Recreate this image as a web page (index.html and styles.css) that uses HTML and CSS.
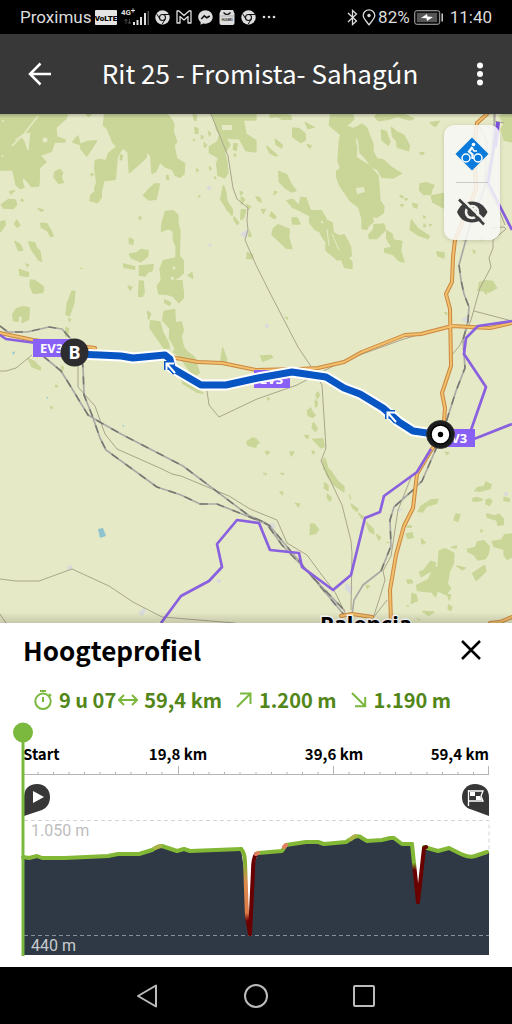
FILE: index.html
```html
<!DOCTYPE html>
<html lang="nl">
<head>
<meta charset="utf-8">
<meta name="viewport" content="width=device-width, initial-scale=1">
<title>Rit 25 - Fromista- Sahagún</title>
<link rel="stylesheet" href="styles.css">
</head>
<body>
<svg width="0" height="0" class="defs" aria-hidden="true">
  <symbol id="chrome" viewBox="0 0 15 15">
    <circle cx="7.500" cy="7.500" r="7.200" fill="#ddd"/>
    <circle cx="7.500" cy="7.500" r="3" fill="#ddd" stroke="#111" stroke-width="1.100"/>
    <path d="M7.500 4.500H14M4.800 9 1.700 3.800M10.200 9 7 14.500" stroke="#111" stroke-width="1"/>
  </symbol>
</svg>

<div class="status">
  <div class="status-left">
    <span>Proximus</span>
    <svg class="volte" width="22" height="15" viewBox="0 0 22 15"><rect width="22" height="15" rx="1" fill="#e4e4e4"/><text x="11" y="11" text-anchor="middle" class="volte-text">VoLTE</text></svg>
    <svg class="signal" width="28" height="18" viewBox="0 0 28 18"><text x="0" y="7" class="net">4G</text><path d="M10 2.500h4M12 .5v4" stroke="#ddd"/><path d="M5 16v-5M3.500 13 5 11l1.500 2M8.500 11v5M7 14l1.500 2 1.500-2" stroke="#444" fill="none"/><path d="M13 17v-3M16.500 17v-5M20 17V9M24 17V5" stroke="#ddd" stroke-width="2"/><path d="M27.300 17V3" stroke="#555" stroke-width="1.500"/></svg>
    <svg width="15" height="15"><use href="#chrome"/></svg>
    <svg width="16" height="14" viewBox="0 0 16 14"><path d="M1 13V1h2l5 4.500L13 1h2v12h-3V6.500L8 10 4 6.500V13z" fill="none" stroke="#ddd" stroke-width="1.300" stroke-linejoin="round"/></svg>
    <svg width="15" height="15" viewBox="0 0 15 15"><path d="M7.500.3C3.400.3.200 3.300.200 7.100c0 2.100.9 3.800 2.400 5v2.600l2.500-1.300c.8.200 1.500.3 2.400.3 4.100 0 7.200-2.900 7.200-6.600S11.600.3 7.500.3z" fill="#ddd"/><path d="m3.300 9 3-3.200 2.500 2L11.800 6" fill="none" stroke="#111" stroke-width="1.600"/></svg>
    <svg width="16" height="15" viewBox="0 0 16 15"><path d="M2 0h12l1.500 3.500V13q0 2-2 2h-11q-2 0-2-2V3.500z" fill="#ddd"/><path d="M4.500 2.500q3.500 4 7 0" fill="none" stroke="#111" stroke-width="1.200"/><text x="8" y="11" text-anchor="middle" class="huawei">HUAWEI</text><path d="M.5 6h15" stroke="#888" stroke-width=".5"/></svg>
    <svg width="15" height="15"><use href="#chrome"/></svg>
    <svg width="14" height="4" viewBox="0 0 14 4" fill="#ddd"><circle cx="2" cy="2" r="1.300"/><circle cx="7" cy="2" r="1.300"/><circle cx="12" cy="2" r="1.300"/></svg>
  </div>
  <div class="status-right">
    <svg width="11" height="17" viewBox="0 0 11 17"><path d="m1 4 8.500 8L5.500 15.500v-14l4 3.500L1 13" fill="none" stroke="#ddd" stroke-width="1.300"/></svg>
    <svg class="pin" width="14" height="17" viewBox="0 0 14 17"><path d="M7 15.800C3.500 11.500 1.200 9 1.200 6.500a5.800 5.700 0 0 1 11.600 0C12.800 9 10.500 11.500 7 15.800z" fill="none" stroke="#ddd" stroke-width="1.300"/><circle cx="7" cy="6.500" r="1.700" fill="#ddd"/></svg>
    <span>82%</span>
    <svg width="30" height="15" viewBox="0 0 30 15"><rect x=".7" y=".7" width="25" height="13.600" rx="2" fill="#111" stroke="#aaa"/><rect x="3" y="3" width="20" height="9" fill="#555"/><path d="m7 8 6-4 .5 2.500L19 7l-6 4-.5-2.700z" fill="#fff"/><path d="M28.200 3.500v8" stroke="#ccc" stroke-width="1.500"/></svg>
    <span class="clock">11:40</span>
  </div>
</div>

<header class="bar">
  <button class="icon-btn" aria-label="Terug"><svg width="24" height="24" viewBox="0 0 24 24"><path d="M23 12H3M12.500 1.500 2 12 12.500 22.500" fill="none" stroke="#fff" stroke-width="2.500"/></svg></button>
  <h1>Rit 25 - Fromista- Sahagún</h1>
  <button class="icon-btn" aria-label="Meer"><svg width="8" height="24" viewBox="0 0 8 24" fill="#fff"><circle cx="4" cy="3.500" r="3"/><circle cx="4" cy="12" r="3"/><circle cx="4" cy="20.500" r="3"/></svg></button>
</header>

<main class="map">
<svg class="map-canvas" viewBox="0 114 512 509" preserveAspectRatio="xMidYMid slice" role="img" aria-label="Kaart">
  <defs>
    <linearGradient id="edge" x1="0" y1="0" x2="0" y2="1"><stop offset="0" stop-color="#000" stop-opacity="0"/><stop offset="1" stop-color="#000" stop-opacity=".15"/></linearGradient>
    <path id="rail-west" d="M0 326 8 332 27 332 49 327 62 329 70 338 80 350 83 367 84 395 92 415 100 438 106 450 157 487 181 495 200 504 217 504 252 518 269 525 345 616"/>
    <path id="road" d="M0 333 33 340 95 348M170 357 198 362 222 363 256 370 300 369 318 368 344 362 362 352 405 335 421 334 452 326 490 328 512 323M487 114 477 123 474 145 476 189 455 240 453 257 452 282 446 294 450 309 451 366 442 393 445 408 443 435 432 449 417 474 413 508 404 526 396 555 390 590 391 623M341 616 352 614 372 617M490 623 500 622 512 617"/>
    <path id="route" d="M75 354 100 355 121 356 133 358 165 355 170 359 172 368 201 385H226L258 378 292 372 326 377 344 388 360 394 383 408 399 422 413 431 441 435"/>
    <path id="arrow" d="M175 373 167 364M166.500 370V363.500H174"/>
  </defs>
  <rect x="-500" y="-400" width="1512" height="1500" fill="#e6e9c5"/>
  <g fill="#c9d698" stroke="#c9d698" stroke-linejoin="round" stroke-width="4">
    <g transform="translate(0 114) scale(.33333)">
      <path d="M0 0H202L200 12 168 40 170 68 196 78 194 84 164 84 154 112 120 124 138 144 118 162V200L116 216 94 218 86 206 70 190 66 200 72 220 60 224 48 212 40 176 38 168H0z"/>
      <path d="M314 0H498L508 6 522 30 520 52 530 84 522 94 526 114 530 134 554 148 552 180 540 190 526 184 518 168 494 158 480 144 468 172 456 178 452 124 436 112 440 128 422 146 388 176 384 114 368 102 352 128 350 148 346 196 332 198 312 200 304 232 304 250 292 266 270 260 272 244 286 232 284 222 290 206 284 162 286 140 298 136 318 140 326 118 350 98 338 84 322 44 310 34z"/>
      <path d="M234 66 240 92 218 84zM242 90 262 82 290 80 274 106 260 126 242 104zM164 174 180 166 188 176 184 190 190 206 176 208 162 190zM30 232 44 230 32 240zM4 272 26 256 46 258 50 272 40 284 10 282zM114 284 130 288 124 292zM0 324 14 320 16 332 2 352zM50 318 60 334 52 340 44 330zM122 328 140 328 152 348 160 366 152 368 142 350 124 340zM44 382 60 390 68 408 56 410zM86 384 104 386 110 402 120 412 124 442 116 438 94 406zM58 466 86 476 84 488 60 484zM92 498 106 500 130 518 128 536 100 538 90 516z"/>
      <path d="M464 210 478 210 474 232 468 256 446 258 430 244 448 224zM496 292 520 290 534 304 534 328 540 352 538 426 550 440 550 476 536 490 522 496 524 484 510 488 512 500 546 500 550 540H476L472 516 484 498 480 464 490 440 528 432 528 396 520 378 520 352 506 344 484 352 486 328zM388 372 400 378 398 392 388 388zM388 420 410 416 424 406 444 410 444 426 422 444 394 432zM370 450 404 458 404 466 372 460zM418 456 460 452 456 470 444 474 436 486 418 484zM418 500 430 502 432 540H416zM384 516 396 520 390 528zM564 484 576 476 578 492z"/>
      <path d="M580 0 590 6 588 20 582 16zM584 40 594 44 594 58 586 58zM580 76h4l-2 4zM604 64l6 6-6 4zM612 86l8 8-6 6zM626 52l6 8-4 6zM590 164l5 5-4 4zM628 158l6 6-4 4zM644 188l4 4-4 2zM500 184h4l2 12h-6zM418 308l6 4-6 5zM362 122l6 4-4 12-4-4zM596 245l4 2-4 2z"/>
      <path d="M638 0H768V18H730L738 60 768 80V114L738 110 718 74H694L678 70 682 80 690 92 674 118 680 140 684 176 674 192 654 184 650 148 656 132 628 116 628 98 652 84 660 60 650 48zM702 88l10 2-4 20-8-4zM702 120l6 2-4 6zM670 214 678 234 680 260 698 288 696 304 682 288 662 256zM720 232l8 4-6 6zM724 248l10 10-10 12zM724 286l14 2-8 26-8 2zM702 308l14 18-4 6-10-14zM742 416l16 6v12h-18zM740 272l12 6-8 8zM748 350l6 16-8 2z"/>
      <path d="M258 0h16l-8 8zM78 450l8 2-4 6zM65 255l5 4-6 3zM272 180l8 0-4 6zM241 463h5zM216 532h8v6z"/>
    </g>
    <g transform="translate(256 114) scale(.33333)">
      <path d="M224 0H290L294 16 270 36 292 44 318 30 332 42 352 92 350 110 362 134 382 138 406 160 436 178 412 192 378 190 366 168 346 158 328 132 312 116 308 78 296 66 302 104 300 130 338 154 366 184 368 206 372 260 384 278 382 296 362 310 348 306 352 324 338 334 332 346 318 344V314L308 280 284 262 252 216 242 190V172L254 164 246 140 250 80 254 62 220 34z"/>
      <path d="M44 0h34l26 4 2 12H78L66 8 42 10zM110 42 130 44 148 60 148 78 134 86 110 68zM148 26 174 40 156 44zM58 76 78 92 78 102 60 92zM32 96 48 110 64 124 58 126 40 116zM154 92l12 4-6 6zM68 172 92 182 104 208 120 230 106 234 86 220 70 204zM56 232l6 2-8 8zM0 248l12 4 4 12-10-4zM16 286l12 0-6 12zM46 294l14 14-4 6-14-8zM108 312h16l8 18-22 0zM66 332 100 346 98 370 108 404 90 402 72 384 48 362 52 344z"/>
      <path d="M92 260 110 256 130 276 134 250 150 252 156 270 164 290 196 290 212 318 228 326 232 356 252 366 264 362 278 386 284 400 286 426 276 430 288 444 288 464 266 460 256 436 244 438 228 424 210 410 210 384 198 368 192 354 178 348 160 324 162 306 132 290 110 280z"/>
      <path d="M354 332 384 330 388 348 362 374 340 374 338 362 352 348zM392 350 408 360 412 378 438 382 434 410 444 444 428 440 412 422 386 414 386 404 408 400 392 374zM466 318 486 344 520 366 516 374 488 364 462 346zM504 330l5 6-5 4zM502 306l6 2-4 4zM520 332h6l-4 4zM492 210 512 206 534 214 528 226 524 242 504 242 490 228zM526 246 562 238V282L530 264zM470 268 484 272 482 282 472 278zM434 272h8l-4 6zM446 254h8l-4 4zM432 244l10 4-4 4zM542 414 564 416 564 432 546 426z"/>
      <path d="M364 0H442L474 14 460 18 424 8 398 16 368 20 356 8zM376 48 390 52 402 84 396 94 378 78zM406 40 420 52 444 64 460 94 458 110 424 100 422 82 410 68zM492 116h12l-6 6zM522 26 550 22 538 38zM730 6 746 0H768V84L744 78 736 44 744 30zM670 506 686 500 710 502 722 522 700 534 668 524zM650 408l8 4-4 6zM672 370l6 2-2 6zM622 380h10z"/>
    </g>
    <g transform="translate(0 290) scale(.33333)">
      <path d="M96 0H132L112 8zM38 74 50 56 68 50 88 54 86 88 66 98 68 78 56 78 54 94 40 92zM216 4h8L222 38 208 78 198 74 202 38zM206 86l6 2-4 6zM198 112l8 4-4 24-6-4zM84 206 102 214 122 234 120 240 96 230zM186 228l4 4-4 16-4-4zM416 0H432L428 18 416 20zM476 0H550L550 24 536 38 518 18 484 8zM494 30 512 38 508 46 494 38zM492 64 524 58 526 98 544 96 550 120 544 140 550 170 560 184 584 202 598 248 580 260 540 200 520 186 526 176 508 144 510 116 488 92zM442 64l10 8-6 16zM452 92 480 96 488 126 506 160 508 176 492 174 450 114zM668 174 680 208 680 216 662 214zM546 270 580 292 610 310 590 306 548 280zM740 456 756 444 768 446V472L744 466zM166 286l6 2-4 4zM152 350l6 2-4 4z"/>
    </g>
    <g transform="translate(256 290) scale(.33333)">
      <path d="M664 0H706L690 4zM14 198 44 196 50 202 20 214zM186 306 190 316 184 326 180 314zM178 330l6 6-2 14h-4zM154 362 164 354 170 368 178 376 170 382 156 376zM172 398 184 416 178 424 168 412zM146 436l12 2-4 8zM170 448 200 446 206 470 196 474zM0 448l10 10-10 6zM28 484l12 2-6 8zM102 486h12l-8 12zM168 482l8 4-4 6zM206 504 212 520 216 540H204L200 516zM88 82h6v6zM566 68h6v6zM34 324l6 2-4 4zM568 486l10 2-6 6zM686 8h6v4z"/>
    </g>
    <g transform="translate(256 460) scale(.33333)">
      <path d="M200 0 208 16 226 36 244 62 264 80 264 96 232 74 212 46zM206 68l10 8v16l-12-8zM214 102l12 12-4 10-8-10zM22 40h8v4zM74 40h8v4zM72 96h8v8zM118 130l12 2-2 8zM164 192 174 192 188 208 180 220 162 224zM280 104l4 14zM286 132 306 148 302 154 290 144zM308 160l14 10-4 6zM330 186 352 208 354 222 340 214zM362 224l12 8-6 8zM392 248h6zM330 376l10 2-6 8z"/>
      <path d="M486 154 494 140 524 120 546 118 542 130 512 138 500 156zM600 162 612 164 606 184 594 180zM656 92 666 82 684 80 690 66 706 74 702 86 672 94zM650 116 662 112 680 118 676 122 652 124zM690 120 700 116 708 124 700 136 690 132zM744 112 760 116 760 124 744 122zM692 162 716 168 728 162 742 176 742 194 726 196 722 180 694 172zM674 210l6 2-4 4zM454 198h12v4h-12zM450 222 468 218 472 232 456 236zM496 236 508 248 498 252zM586 262 602 258 600 264zM550 272 568 266 594 280 592 310 580 336 574 372 584 386 570 404 544 392 538 410 528 396 484 392 482 376 518 358 530 330 546 320zM490 336 504 330 524 304 538 308 536 326 496 350zM602 318l26 6-8 6zM634 268 658 262 664 246 684 242 700 260 698 278 688 296 666 300 654 284 636 276zM650 340 686 316 690 334 660 362zM708 244 736 240 746 224 768 222V290L754 298 744 286V268L714 260zM452 360h14l4 8-14 2zM468 400 480 404 484 422 466 430zM452 438h6zM574 404h10l-4 16zM578 434l10 8-4 10-8-6zM500 454 534 456 518 466zM484 476l8 4z"/>
    </g>
  </g>
  <g fill="none" stroke="#e6e9c5" stroke-linejoin="round">
    <path d="M12 146 24 134 38 116" stroke-width="1.500"/><path d="m15 140 9-6 6-1-1 7-1 10-3-9-4-5z" fill="#e6e9c5"/><path d="M332 234 339 250M327 229 329 246"/>
  </g>
  <g fill="#e6e9c5"><circle cx="45" cy="140" r="2.500"/><circle cx="3" cy="121" r="1"/><circle cx="2.500" cy="156" r="1"/><circle cx="174" cy="268" r="1.500"/><circle cx="322" cy="222" r="1.200"/><path d="m356 188 8-1 1 5-8 2zM222 125h10v5h-10z"/></g>
  <g fill="#d9dadb"><path d="m240 234 8-5v7l-4 2zM138 613l6-5 2 3-4 5zM67 567l5-2 1 4-5 1zM345 583l8 4-2 8-6-6zM396 510l8-2-5 4zM330 596l7 8-4 2zM461 320l6-4v7z"/><circle cx="209" cy="188" r="2"/><circle cx="210" cy="245" r="1.500"/><circle cx="267" cy="326" r="2"/><circle cx="219" cy="581" r="2"/><circle cx="506" cy="494" r="2"/><circle cx="272" cy="526" r="3"/></g>
  <path d="m98 529 5-1 3 8-6 2zM12 353l3-2-1 4zM46 397h2v2zM122 425h2v2z" fill="#8fc3cd"/>

  <g fill="none" stroke="#aaa58d" stroke-width="1" stroke-linejoin="round">
    <path d="M211 114 228 156 233 188 237 199 248 208 247 220 248 230 245 240 256 265 270 293 298 347 312 368 322 385 326 448 321 461 342 505 351 541 352 553 351 610"/>
    <path d="M0 371 6 371 16 368 32 355M78 364V387L95 406 105 434 117 449 162 469 172 474 181 476 229 496 250 509 277 520 287 543 307 555 321 574 335 592 346 615"/>
    <path d="M207 391 209 405 219 417 257 399 297 385 343 361 404 339 452 325"/>
    <path d="M0 579 16 581 39 581 72 569 109 586 133 602 162 617 235 623M0 614 6 623M491 228 504 227 506 229 493 240V248L489 258 491 267 480 288 471 320 460 345 452 355M474 311 512 321M412 475 398 510 391 556 383 571 385 580 379 600 373 618 387 600M494 114v7l10 2M479 125 487 142 485 184 497 205 505 225"/>
  </g>
  <g fill="none" stroke="#aaa9a5" stroke-width="1.700" stroke-linejoin="round">
    <use href="#rail-west"/>
    <path d="M43 356 61 371 71 387 88 415 98 421 121 434 183 466 248 515 266 523 282 545 345 611"/>
    <path d="M495 114 492 153 484 190 470 225 459 265 461 280 464 294 469 307 468 321 463 340 465 368 456 391 442 435 422 481 413 490 394 507 390 520 391 546 381 571 363 585 354 600 352 615"/>
  </g>
  <g fill="none" stroke="#777771" stroke-width="1.500" stroke-dasharray="8 9">
    <use href="#rail-west"/>
    <path d="M43 356 61 371 71 387 88 415 98 421 121 434 183 466 248 515 266 523 282 545 345 611M459 265 461 280 464 294 469 307 468 321 463 340 465 368 456 391 442 435 422 481 413 490 394 507 390 520 391 546 381 571"/>
  </g>
  <g fill="none" stroke-linejoin="round" stroke-linecap="round">
    <use href="#road" class="road-edge"/>
    <use href="#road" class="road-core"/>
  </g>
  <path d="M0 335 6 339 36 343M431 449 417 472 384 496 380 512 365 518 351 575 333 590 302 567 299 553 270 550 259 523 237 520 217 544 222 567 209 581 181 596 161 623M512 321 478 326 466 338 464 354 486 387 471 430M474 439 512 424M498 122 488 183 512 230" fill="none" stroke="#8960df" stroke-width="2.700" stroke-linejoin="round"/>
  <path d="M498 122 495 147" stroke="#7b4fe0" stroke-width="4" fill="none"/>
  <text x="366" y="632" text-anchor="middle" class="city">Palencia</text>

  <g class="shields">
    <rect x="33" y="339" width="40" height="18"/><text x="40" y="353">EV3</text>
    <rect x="254" y="370" width="36" height="18"/><text x="260" y="384">EV3</text>
    <rect x="439" y="429" width="36" height="18"/><text x="444" y="443">EV3</text>
  </g>
  <g fill="none" stroke-linejoin="round" stroke-linecap="round">
    <use href="#route" class="route-edge"/>
    <use href="#route" class="route-core"/>
  </g>
  <g fill="none">
    <use href="#arrow" class="arrow-edge"/><use href="#arrow" class="arrow-core"/>
    <use href="#arrow" class="arrow-edge" x="221" y="49"/><use href="#arrow" class="arrow-core" x="221" y="49"/>
  </g>
  <circle cx="74.500" cy="352.500" r="14" fill="#2d2d2f"/><text x="74.500" y="359" text-anchor="middle" class="marker">B</text>
  <circle cx="440.500" cy="434.500" r="14" fill="#1b1c1d" stroke="#333" stroke-width=".8"/><circle cx="440.500" cy="434.500" r="9.500" fill="#fff" stroke="#000" stroke-width="1.500"/><circle cx="440.500" cy="434.500" r="2.700" fill="#000"/>
  <rect x="-500" y="612" width="1512" height="12" fill="url(#edge)"/>
</svg>
<div class="map-tools">
  <button aria-label="Fietsroutes"><svg width="34" height="34" viewBox="0 0 34 34"><path d="M17 .5 33.500 17 17 33.500.5 17z" fill="#087bdc"/><g fill="none" stroke="#fff"><circle cx="11" cy="21" r="4" stroke-width="1.500"/><circle cx="23" cy="21" r="4" stroke-width="1.500"/><path d="M17.500 10 14 14.500 17.500 17.500V22" stroke-width="2.300"/><path d="M17.500 11.500 19 14h3" stroke-width="1.500"/></g><circle cx="18.500" cy="7.500" r="1.800" fill="#fff"/></svg></button>
  <hr>
  <button aria-label="Verbergen"><svg width="34" height="28" viewBox="0 0 34 28"><path d="M2 14C5 7 10 3.500 17 3.500S29 7 32.500 14C29 21 24 24.500 17 24.500S5 21 2 14z" fill="#3d3d3d"/><circle cx="17" cy="14" r="7.300" fill="#f2f3ec"/><circle cx="17" cy="14" r="4.700" fill="#3d3d3d"/><circle cx="19" cy="11.500" r="2" fill="#f2f3ec"/><path d="M6.500.5 31 24" stroke="#f2f3ec" stroke-width="2.500"/><path d="M4 1.500 29 26.500" stroke="#3d3d3d" stroke-width="2.500"/></svg></button>
</div>
</main>

<section class="sheet">
  <div class="sheet-head">
    <h2>Hoogteprofiel</h2>
    <button class="icon-btn close" aria-label="Sluiten"><svg width="20" height="20" viewBox="0 0 20 20"><path d="m1 1 18 18M19 1 1 19" stroke="#000" stroke-width="2.500"/></svg></button>
  </div>
  <div class="stats">
    <span class="stat"><svg width="19" height="20" viewBox="0 0 19 20"><circle cx="9" cy="11.300" r="7.700"/><path d="M6 1h6M9 7v5M15 4l2 2"/></svg><span>9 u 07</span></span>
    <span class="stat distance"><svg width="20" height="14" viewBox="0 0 20 14"><path d="M1 7h18M6 2 1 7l5 5M14 2l5 5-5 5"/></svg><span>59,4 km</span></span>
    <span class="stat climb"><svg width="16" height="16" viewBox="0 0 16 16"><path d="M1 15 14 2M4 1.500h10.500V12"/></svg><span>1.200 m</span></span>
    <span class="stat descent"><svg width="16" height="16" viewBox="0 0 16 16"><path d="m1 1 13 13M4 14.200h10.200V5"/></svg><span>1.190 m</span></span>
  </div>
  <svg class="profile" viewBox="12 720 488 236" role="img" aria-label="Hoogteprofiel">
    <defs><linearGradient id="drop" x1="0" y1="0" x2="0" y2="1"><stop offset="0" stop-color="#7db52f"/><stop offset=".2" stop-color="#8cac34"/><stop offset=".4" stop-color="#dd8a51"/><stop offset=".75" stop-color="#dd7b48"/><stop offset=".85" stop-color="#690000"/></linearGradient>
    <linearGradient id="drop-2" x1="0" y1="0" x2="0" y2="1"><stop offset="0" stop-color="#83b736"/><stop offset=".32" stop-color="#83b736"/><stop offset=".45" stop-color="#690000"/></linearGradient></defs>
    <g class="axis">
      <text x="23" y="760">Start</text><text x="178" y="760" text-anchor="middle">19,8 km</text><text x="334" y="760" text-anchor="middle">39,6 km</text><text x="489" y="760" text-anchor="end">59,4 km</text>
    </g>
    <path d="M23 774.500H489M178.500 766v8M333.500 766v8M488.500 766v8M38 772v3M53.500 772v3M69 772v3M84.500 772v3M100 772v3M115.500 772v3M131 772v3M146.500 772v3M162 772v3M193.500 772v3M209 772v3M224.500 772v3M240 772v3M256 772v3M271.500 772v3M287 772v3M302.500 772v3M318 772v3M349 772v3M364.500 772v3M380 772v3M395.500 772v3M411 772v3M427 772v3M442.500 772v3M458 772v3M473.500 772v3" fill="none" stroke="#b5b5b5"/>
    <path d="M24 820.500H489V855" fill="none" stroke="#d4d4d4" stroke-dasharray="4 3"/>
    <path d="M23 857 29 858 37 856 42 858 65 858 108 856 118 854 139 854 152 850 162 846 177 851 184 849 190 851 241 849 247 890 250 934 254 865 258 853 282 851 286 845 306 842 318 842 324 844 346 842 354 836 361 838 367 841 382 840 390 838 402 844 412 844 418 902 424 847 438 851 449 848 461 854 471 857 489 852V955H23z" fill="#2e3945"/>
    <path d="M24 935.500H489" stroke="#86909a" stroke-dasharray="4 3" fill="none"/>
    <g fill="none" stroke="#83b736" stroke-width="4" stroke-linejoin="round" stroke-linecap="round">
      <path d="M23 857 29 858 37 856 42 858 65 858 108 856 118 854 139 854 152 850Q158 846 162 846L177 851 184 849 190 851 241 849M258 853 282 851 286 845 306 842 318 842 324 844 346 842 354 837Q359 835 362 838L367 841 382 840 390 838H394L402 844 412 844M424 847 438 851 449 848 461 854Q469 858 475 856L487 852"/>
      <path d="M241 849 Q245 853 245 862L247 917 250 934" stroke="url(#drop)"/><path d="M412 844 418 902" stroke="url(#drop-2)"/>
      <path d="M250 934 253 870Q253 859 256 854M418 902 424 848 426 847" stroke="#690000"/>
      <path d="m256 854 2-1M284 847l2-2" stroke="#df8060"/><path d="m351 839 4-3M155 848l5-2" stroke="#abb347"/>
    </g>
    <g class="heights"><text x="31" y="836">1.050 m</text><text x="31" y="951" class="low">440 m</text></g>
    <path d="M24 816V797C24 789 29 784 37 784S50 790 50 797C50 803 47 808 42 810z" fill="#373737"/><path d="m33 791 11 6-11 6z" fill="#fff"/>
    <path d="M489 816V797C489 789 483 784 475 784S462 790 462 797C462 803 465 807 470 809z" fill="#373737"/>
    <path d="M468.500 790V806M469 791h14l-2 5 2 5h-14" fill="none" stroke="#fff" stroke-width="1.300"/><path d="M470 792h5v4h5l2 4h-6v-4h-6z" fill="#fff"/>
    <path d="M23 732V956" stroke="#7bb83e" stroke-width="3"/><circle cx="23" cy="732.500" r="10" fill="#7bb83e"/>
  </svg>
</section>

<nav class="nav">
  <button aria-label="Terug"><svg width="24" height="24" viewBox="0 0 24 24"><path d="M20 1.500v21L2 12z"/></svg></button>
  <button aria-label="Start"><svg width="24" height="24" viewBox="0 0 24 24"><circle cx="12" cy="12" r="11"/></svg></button>
  <button aria-label="Overzicht"><svg width="24" height="24" viewBox="0 0 24 24"><rect x="2" y="2" width="20" height="20" rx="1"/></svg></button>
</nav>
</body>
</html>
```
FILE: styles.css
```css
* { box-sizing: border-box; }
body {
  margin: 0;
  min-height: 100vh;
  display: flex;
  flex-direction: column;
  background: #fff;
  color: #000;
  font-family: "Noto Sans CJK JP", "Noto Sans", sans-serif;
}
button { border: 0; padding: 0; background: none; display: flex; align-items: center; justify-content: center; }
h1, h2 { margin: 0; }
svg { flex: none; }
.defs { position: absolute; }

.status {
  height: 34px;
  padding: 0 20px;
  display: flex;
  align-items: center;
  justify-content: space-between;
  background: #000;
  color: #ddd;
  font: 17px/20px Roboto, sans-serif;
}
.status-left { display: flex; align-items: center; gap: 6px; }
.status-right { display: flex; align-items: center; gap: 4px; }
.volte { margin-left: -2px; }
.signal { margin-left: -2px; }
.pin { margin-right: -2px; }
.clock { margin-left: 2px; }
.volte-text { font: 900 8px Roboto, sans-serif; fill: #000; }
.net { font: 700 8px Roboto, sans-serif; fill: #ddd; }
.huawei { font: 700 3px Roboto, sans-serif; fill: #333; }

.bar {
  height: 80px;
  padding: 0 8px 0 16px;
  display: flex;
  align-items: center;
  justify-content: space-between;
  background: #383838;
  color: #fff;
}
.bar h1 { font-size: 26px; line-height: 40px; margin-bottom: 2px; font-weight: 400; white-space: nowrap; }
.icon-btn { width: 48px; height: 48px; }

.map { position: relative; flex: 1 0 480px; overflow: hidden; background: #e6e9c5; }
.map-canvas { position: absolute; width: 100%; height: 100%; }
.map::after { content: ""; position: absolute; top: 0; left: 0; right: 0; height: 4px; background: linear-gradient(rgba(0, 0, 0, .2), transparent); }
.map-tools {
  position: absolute;
  top: 11px;
  right: 12px;
  width: 56px;
  display: flex;
  flex-direction: column;
  align-items: center;
  border-radius: 10px;
  background: rgba(248, 248, 248, .85);
  box-shadow: 0 1px 4px rgba(0, 0, 0, .15);
}
.map-tools button { width: 56px; height: 57px; }
.map-tools hr { width: 32px; height: 1px; margin: 0; border: 0; background: #c9c9c9; }
.road-edge { stroke: #cc8740; stroke-width: 4px; }
.road-core { stroke: #f0c06c; stroke-width: 2px; }
.route-edge { stroke: #fff; stroke-width: 11px; }
.route-core { stroke: #0756c4; stroke-width: 7px; }
.arrow-edge { stroke: #0756c4; stroke-width: 5px; }
.arrow-core { stroke: #fff; stroke-width: 2px; }
.shields rect { fill: #8960f5; }
.shields text { fill: #fff; font: 700 13px "Noto Sans", sans-serif; }
.marker { fill: #fff; font: 700 18px "Noto Sans", sans-serif; }
.city { font: 700 22px "Noto Sans", sans-serif; fill: #000; stroke: #fff; stroke-width: 3px; paint-order: stroke; }

.sheet { padding: 7px 12px 11px; background: #fff; }
.sheet-head { display: flex; align-items: center; justify-content: space-between; padding-left: 11px; height: 40px; }
.sheet-head h2 { font-size: 26px; line-height: 40px; font-weight: 700; }
.sheet-head .close { margin-right: 5px; }
.stats { display: flex; align-items: center; height: 32px; margin: 14px 0 4px; padding-left: 22px; color: #528619; font-size: 20px; line-height: 32px; font-weight: 700; white-space: nowrap; }
.stat { display: flex; align-items: center; gap: 6px; }
.stat svg { fill: none; stroke: #7bb83e; stroke-width: 2px; }
.distance { margin-left: 2px; }
.climb, .descent { margin-left: 14px; gap: 7px; }
.profile { display: block; width: 100%; }
.axis { font-size: 15px; font-weight: 700; }
.heights { font: 16px Roboto, sans-serif; fill: #bdbdbd; }
.low { fill: #c8cbce; }

.nav { height: 57px; display: flex; align-items: center; justify-content: center; gap: 60px; background: #000; }
.nav button { width: 48px; height: 48px; }
.nav svg { fill: none; stroke: #bbb; stroke-width: 2px; stroke-linejoin: round; }
```
